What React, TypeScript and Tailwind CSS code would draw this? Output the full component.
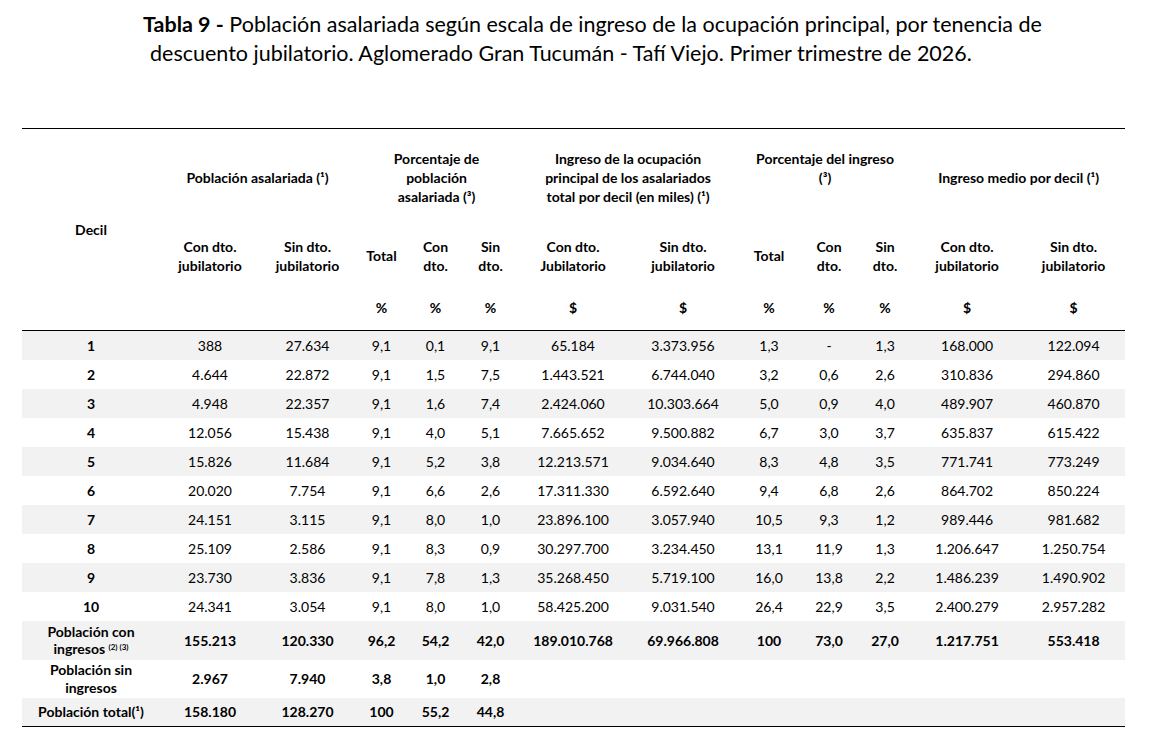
const widths = [138, 100, 95, 53, 55, 55, 110, 110, 62, 58, 54, 110, 103];

type Row = { decil: string; v: string[] };

const rows: Row[] = [
    { decil: "1", v: ["388", "27.634", "9,1", "0,1", "9,1", "65.184", "3.373.956", "1,3", "-", "1,3", "168.000", "122.094"] },
    { decil: "2", v: ["4.644", "22.872", "9,1", "1,5", "7,5", "1.443.521", "6.744.040", "3,2", "0,6", "2,6", "310.836", "294.860"] },
    { decil: "3", v: ["4.948", "22.357", "9,1", "1,6", "7,4", "2.424.060", "10.303.664", "5,0", "0,9", "4,0", "489.907", "460.870"] },
    { decil: "4", v: ["12.056", "15.438", "9,1", "4,0", "5,1", "7.665.652", "9.500.882", "6,7", "3,0", "3,7", "635.837", "615.422"] },
    { decil: "5", v: ["15.826", "11.684", "9,1", "5,2", "3,8", "12.213.571", "9.034.640", "8,3", "4,8", "3,5", "771.741", "773.249"] },
    { decil: "6", v: ["20.020", "7.754", "9,1", "6,6", "2,6", "17.311.330", "6.592.640", "9,4", "6,8", "2,6", "864.702", "850.224"] },
    { decil: "7", v: ["24.151", "3.115", "9,1", "8,0", "1,0", "23.896.100", "3.057.940", "10,5", "9,3", "1,2", "989.446", "981.682"] },
    { decil: "8", v: ["25.109", "2.586", "9,1", "8,3", "0,9", "30.297.700", "3.234.450", "13,1", "11,9", "1,3", "1.206.647", "1.250.754"] },
    { decil: "9", v: ["23.730", "3.836", "9,1", "7,8", "1,3", "35.268.450", "5.719.100", "16,0", "13,8", "2,2", "1.486.239", "1.490.902"] },
    { decil: "10", v: ["24.341", "3.054", "9,1", "8,0", "1,0", "58.425.200", "9.031.540", "26,4", "22,9", "3,5", "2.400.279", "2.957.282"] },
];

const subHeads = [
    ["Con dto.", "jubilatorio"],
    ["Sin dto.", "jubilatorio"],
    ["Total"],
    ["Con", "dto."],
    ["Sin", "dto."],
    ["Con dto.", "Jubilatorio"],
    ["Sin dto.", "jubilatorio"],
    ["Total"],
    ["Con", "dto."],
    ["Sin", "dto."],
    ["Con dto.", "jubilatorio"],
    ["Sin dto.", "jubilatorio"],
];

const units = ["", "", "%", "%", "%", "$", "$", "%", "%", "%", "$", "$"];

export default function App() {
    return (
        <div className="w-[1152px] h-[729px] bg-white text-black font-['Lato',sans-serif] overflow-hidden">
            <div className="pt-[10px] pl-[143px] text-[21.5px] leading-[29px] whitespace-nowrap">
                <div><span className="font-bold">Tabla 9 -</span> Población asalariada según escala de ingreso de la ocupación principal, por tenencia de</div>
                <div className="pl-[7px]">descuento jubilatorio. Aglomerado Gran Tucumán - Tafí Viejo. Primer trimestre de 2026.</div>
            </div>

            <table className="ml-[22px] mt-[60px] w-[1103px] table-fixed border-collapse text-[14px] leading-[17px]">
                <colgroup>
                    {widths.map((w, i) => <col key={i} style={{ width: w }} />)}
                </colgroup>
                <thead className="font-bold">
                    <tr className="h-[97px] border-t-[1.5px] border-black">
                        <th rowSpan={3} className="text-center align-middle">Decil</th>
                        <th colSpan={2} className="text-center align-middle">Población asalariada (¹)</th>
                        <th colSpan={3} className="text-center align-middle leading-[19px]">Porcentaje de<br />población<br />asalariada (³)</th>
                        <th colSpan={2} className="text-center align-middle leading-[19px]">Ingreso de la ocupación<br />principal de los asalariados<br />total por decil (en miles) (¹)</th>
                        <th colSpan={3} className="text-center align-middle leading-[19px] pb-[19px]">Porcentaje del ingreso<br />(³)</th>
                        <th colSpan={2} className="text-center align-middle">Ingreso medio por decil (¹)</th>
                    </tr>
                    <tr className="h-[60px]">
                        {subHeads.map((s, i) => (
                            <th key={i} className="text-center align-middle leading-[19px]">
                                {s.map((l, j) => <div key={j}>{l}</div>)}
                            </th>
                        ))}
                    </tr>
                    <tr className="h-[45px] border-b-[1.5px] border-black">
                        {units.map((u, i) => <th key={i} className="text-center align-middle">{u}</th>)}
                    </tr>
                </thead>
                <tbody>
                    {rows.map((r, i) => (
                        <tr key={r.decil} className={i % 2 === 0 ? "h-[29px] bg-[#f2f2f2]" : "h-[29px]"}>
                            <td className="text-center font-bold">{r.decil}</td>
                            {r.v.map((x, j) => <td key={j} className="text-center">{x}</td>)}
                        </tr>
                    ))}
                    <tr className="h-[39px] bg-[#f2f2f2] font-bold">
                        <td className="text-center leading-[17px]">Población con<br />ingresos <sup className="text-[8px]">(2) (3)</sup></td>
                        {["155.213", "120.330", "96,2", "54,2", "42,0", "189.010.768", "69.966.808", "100", "73,0", "27,0", "1.217.751", "553.418"].map((x, j) => (
                            <td key={j} className="text-center">{x}</td>
                        ))}
                    </tr>
                    <tr className="h-[38px] font-bold">
                        <td className="text-center leading-[18px]">Población sin<br />ingresos</td>
                        {["2.967", "7.940", "3,8", "1,0", "2,8", "", "", "", "", "", "", ""].map((x, j) => (
                            <td key={j} className="text-center">{x}</td>
                        ))}
                    </tr>
                    <tr className="h-[29px] bg-[#f2f2f2] font-bold border-b-[1.5px] border-black">
                        <td className="text-center">Población total(¹)</td>
                        {["158.180", "128.270", "100", "55,2", "44,8", "", "", "", "", "", "", ""].map((x, j) => (
                            <td key={j} className="text-center">{x}</td>
                        ))}
                    </tr>
                </tbody>
            </table>
        </div>
    );
}
